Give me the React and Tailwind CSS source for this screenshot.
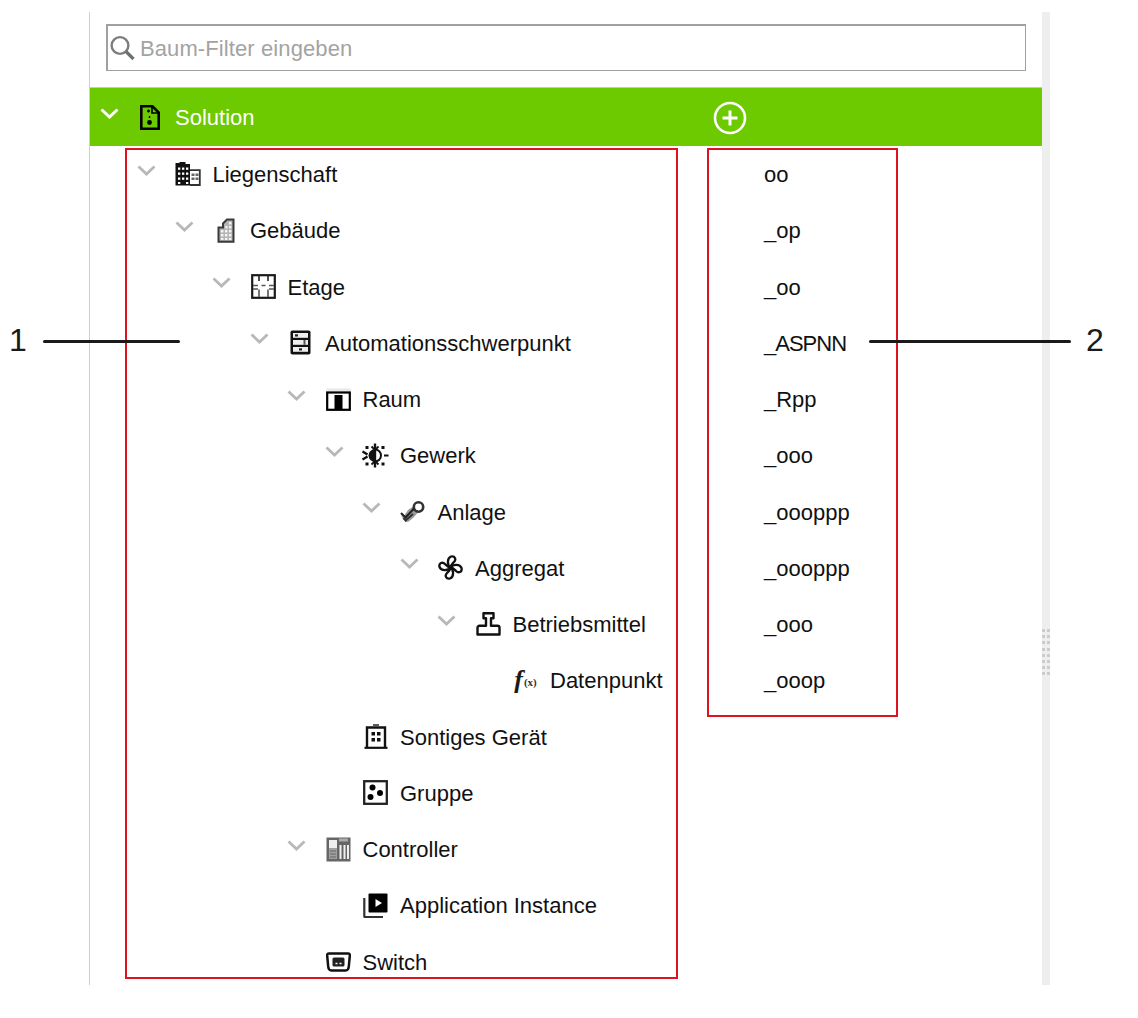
import React from "react";

const S = ({ children, w = 24, h = 24, vb = "0 0 24 24" }) => (
  <svg width={w} height={h} viewBox={vb} fill="none" className="block shrink-0">{children}</svg>
);

const icons = {
  property: (
    <S w={26} h={24} vb="0 0 26 24">
      <path d="M0.500 1h4v-1h6v2h4.500v21.500H0.500z" fill="#111" />
      <g fill="#fff"><rect x="3" y="5.500" width="2.300" height="2.300"/><rect x="7" y="5.500" width="2.300" height="2.300"/><rect x="11" y="5.500" width="2.300" height="2.300"/><rect x="3" y="10.500" width="2.300" height="2.300"/><rect x="7" y="10.500" width="2.300" height="2.300"/><rect x="11" y="10.500" width="2.300" height="2.300"/><rect x="3" y="15.500" width="2.300" height="2.300"/><rect x="7" y="15.500" width="2.300" height="2.300"/><rect x="11" y="15.500" width="2.300" height="2.300"/><rect x="3" y="20" width="2.300" height="2"/><rect x="11" y="20" width="2.300" height="2"/></g>
      <path d="M15 8.200h9.800v14.800H15" stroke="#333" strokeWidth="1.800"/>
      <g fill="#666"><rect x="16.500" y="11.500" width="3" height="2.500"/><rect x="20.500" y="11.500" width="3" height="2.500"/><rect x="16.500" y="15.500" width="3" height="2.500"/><rect x="20.500" y="15.500" width="3" height="2.500"/></g>
    </S>
  ),
  building: (
    <S w={20} h={25} vb="0 0 20 25">
      <path d="M2.500 23.800V9.500H7V5.500L11 1.500h6.500v22.300z" fill="#b5b5b5" stroke="#3a3a3a" strokeWidth="2"/>
      <g fill="#f5f5f5"><rect x="5" y="12" width="2.400" height="2.400"/><rect x="9" y="12" width="2.400" height="2.400"/><rect x="13" y="12" width="2.400" height="2.400"/><rect x="9.500" y="8" width="2" height="2.400"/><rect x="13" y="8" width="2.400" height="2.400"/><rect x="13" y="4" width="2.400" height="2.400"/><rect x="5" y="16" width="2.400" height="2.400"/><rect x="9" y="16" width="2.400" height="2.400"/><rect x="13" y="16" width="2.400" height="2.400"/><rect x="5" y="20" width="2.400" height="2"/><rect x="9" y="20" width="2.400" height="2"/><rect x="13" y="20" width="2.400" height="2"/></g>
    </S>
  ),
  floor: (
    <S w={25} h={25} vb="0 0 25 25">
      <rect x="1.200" y="1.200" width="22.600" height="22.600" stroke="#1a1a1a" strokeWidth="2.200"/>
      <path d="M8 1v6M17 1v6" stroke="#222" strokeWidth="1.600"/>
      <path d="M2 11.500h5M10.500 11.500h4M18 11.500h5M2 15h5M18 15h5M8 15.500v7.500M17 15.500v7.500" stroke="#555" strokeWidth="1.600"/>
    </S>
  ),
  server: (
    <S w={21} h={25} vb="0 0 21 25">
      <rect x="0.500" y="0.500" width="20" height="24" rx="1.800" fill="#111"/>
      <rect x="3" y="3" width="15" height="4.800" fill="#eee"/>
      <rect x="3" y="10" width="15" height="4.800" fill="#eee"/>
      <rect x="3" y="17" width="15" height="4.800" fill="#eee"/>
      <rect x="5" y="4.300" width="3" height="2.200" fill="#222"/>
      <rect x="13.500" y="10" width="2" height="4.800" fill="#555"/>
      <rect x="9" y="18.300" width="3" height="2.200" fill="#222"/>
    </S>
  ),
  room: (
    <S w={25} h={23} vb="0 0 25 23">
      <rect x="0.500" y="0.500" width="24" height="22" fill="#e8e8e8"/>
      <rect x="1.200" y="4.500" width="22.600" height="17.300" fill="#fff" stroke="#000" strokeWidth="2.200"/>
      <rect x="8.500" y="7" width="8" height="14.500" fill="#000"/>
    </S>
  ),
  trade: (
    <S w={27} h={25} vb="0 0 27 25">
      <path d="M13 0.500v24" stroke="#111" strokeWidth="2.400"/>
      <path d="M13 6a6.500 6.500 0 0 0 0 13z" fill="#111"/>
      <path d="M13 6.500a6 6 0 0 1 0 12" stroke="#111" strokeWidth="2"/>
      <path d="M9.500 3.500l3.500 3.500 3.500-3.500M9.500 21.500l3.500-3.500 3.500 3.500" stroke="#111" strokeWidth="1.800"/>
      <path d="M0.500 8.500l5 3M0.500 16.500l5-3" stroke="#111" strokeWidth="2.400"/>
      <g fill="#111"><rect x="3.500" y="3" width="3" height="3"/><rect x="3.500" y="19.500" width="3" height="3"/><rect x="19.500" y="3" width="3" height="3"/><rect x="19.500" y="19.500" width="3" height="3"/><rect x="22" y="11.500" width="4.500" height="2"/></g>
    </S>
  ),
  plant: (
    <S w={26} h={24} vb="0 0 26 24">
      <path d="M8 10l9-6 5 4-9 10-5 4-5-3-2-5 3 2z" fill="#9a9a9a"/>
      <circle cx="18.500" cy="7" r="4.700" fill="#fff" stroke="#333" strokeWidth="2.600"/>
      <path d="M1 13l4.500 4.500L14 8.500" stroke="#222" strokeWidth="2"/>
      <path d="M6 20l7-6M3.500 18l3 3.500" stroke="#333" strokeWidth="2"/>
    </S>
  ),
  fan: (
    <S w={25} h={25} vb="0 0 25 25">
      <g stroke="#111" strokeWidth="2.300" strokeLinejoin="round">
        <path d="M12.500 12.500C9 10 9 3 13 1.500c4-1 5.500 3 3 5.500-1.500 1.500-3 2.500-3.500 5.500z"/>
        <path d="M12.500 12.500C15 9 22 9 23.500 13c1 4-3 5.500-5.500 3-1.500-1.500-2.500-3-5.500-3.500z"/>
        <path d="M12.500 12.500C16 15 16 22 12 23.500c-4 1-5.500-3-3-5.500 1.500-1.500 3-2.500 3.500-5.500z"/>
        <path d="M12.500 12.500C10 16 3 16 1.500 12c-1-4 3-5.500 5.500-3 1.500 1.500 2.500 3 5.500 3.500z"/>
      </g>
    </S>
  ),
  stamp: (
    <S w={25} h={24} vb="0 0 25 24">
      <path d="M7.500 1.300h10v5h-2.500v7.500h6.500a2 2 0 0 1 2 2v6.700H1.500v-6.700a2 2 0 0 1 2-2H10V6.300H7.500z" stroke="#111" strokeWidth="2.400" strokeLinejoin="round"/>
    </S>
  ),
  fx: (
    <span className="flex w-[26px] items-center justify-center font-['Liberation_Serif',serif] text-[#1a1a1a]">
      <span className="text-[26px] leading-none font-bold italic">f</span>
      <span className="mt-[5px] ml-[1px] text-[11px] leading-none font-bold text-[#333]">(x)</span>
    </span>
  ),
  device: (
    <S w={24} h={25} vb="0 0 24 25">
      <path d="M3 24V3.500h18V24" stroke="#111" strokeWidth="2.400"/>
      <path d="M0.500 23.800h23" stroke="#111" strokeWidth="2.200"/>
      <path d="M9 1h6" stroke="#333" strokeWidth="1.600"/>
      <g fill="#111"><rect x="7.500" y="8" width="3.500" height="3.500"/><rect x="13" y="8" width="3.500" height="3.500"/><rect x="7.500" y="14" width="3.500" height="3.500"/><rect x="13" y="14" width="3.500" height="3.500"/></g>
    </S>
  ),
  group: (
    <S w={25} h={25} vb="0 0 25 25">
      <rect x="1.200" y="1.200" width="22.600" height="22.600" stroke="#222" strokeWidth="2.300"/>
      <g fill="#000"><circle cx="9.500" cy="7.500" r="3"/><circle cx="17" cy="13" r="3"/><circle cx="7.500" cy="17" r="3"/></g>
    </S>
  ),
  controller: (
    <S w={25} h={25} vb="0 0 25 25">
      <rect x="0.500" y="0.500" width="24" height="24" fill="#666"/>
      <rect x="3" y="3" width="8" height="8" fill="#eee"/>
      <rect x="3" y="11" width="8" height="11" fill="#a0a0a0"/>
      <path d="M4 14h6M4 17h6M4 20h6" stroke="#666" strokeWidth="1.200"/>
      <path d="M13 3h9" stroke="#aaa" strokeWidth="3"/>
      <path d="M14.500 8v14M18.500 8v14M22 8v14" stroke="#f0f0f0" strokeWidth="2"/>
    </S>
  ),
  app: (
    <S w={25} h={25} vb="0 0 25 25">
      <rect x="5.500" y="0.500" width="19" height="19" rx="1" fill="#000"/>
      <path d="M12.500 6v8l6.500-4z" fill="#fff"/>
      <path d="M1.300 5v18.500a.5.5 0 0 0 .5.500H20" stroke="#333" strokeWidth="2.200"/>
    </S>
  ),
  switch: (
    <S w={25} h={20} vb="0 0 25 20">
      <path d="M3 1.500h19c1.500 0 2 1 1.800 2.500l-1 10.500c-.2 2.500-1.300 4-3.300 4h-14c-2 0-3.100-1.500-3.300-4l-1-10.500C1 2.500 1.500 1.500 3 1.500z" fill="#fff" stroke="#111" strokeWidth="2.500"/>
      <rect x="6.500" y="5.500" width="12" height="9" rx="1.500" fill="#222"/>
      <path d="M9.500 11.500h2M13.500 11.500h2" stroke="#fff" strokeWidth="1.500"/>
    </S>
  ),
};

const rows = [
  ["Liegenschaft", 0, true, "property", "oo"],
  ["Gebäude", 1, true, "building", "_op"],
  ["Etage", 2, true, "floor", "_oo"],
  ["Automationsschwerpunkt", 3, true, "server", "_ASPNN"],
  ["Raum", 4, true, "room", "_Rpp"],
  ["Gewerk", 5, true, "trade", "_ooo"],
  ["Anlage", 6, true, "plant", "_oooppp"],
  ["Aggregat", 7, true, "fan", "_oooppp"],
  ["Betriebsmittel", 8, true, "stamp", "_ooo"],
  ["Datenpunkt", 9, false, "fx", "_ooop"],
  ["Sontiges Gerät", 5, false, "device", ""],
  ["Gruppe", 5, false, "group", ""],
  ["Controller", 4, true, "controller", ""],
  ["Application Instance", 5, false, "app", ""],
  ["Switch", 4, false, "switch", ""],
];

const Chevron = ({ color, sw = 2.8 }) => (
  <svg width="19" height="11" viewBox="0 0 19 11" fill="none" className="block">
    <path d="M1.500 1.500l8 7.500 8-7.500" stroke={color} strokeWidth={sw} />
  </svg>
);

function Row({ label, depth, open, icon, value }) {
  return (
    <div className="flex h-[56.25px] items-center">
      <div className="flex w-[674px] shrink-0 items-center" style={{ paddingLeft: 47 + depth * 37.5 }}>
        <span className="mb-[8px] w-[19px] shrink-0">{open && <Chevron color="#b8b8b8" />}</span>
        <span className="ml-[19px] flex w-[26px] shrink-0 justify-center">{icons[icon]}</span>
        <span className="ml-[11.5px] whitespace-nowrap pt-[2px]">{label}</span>
      </div>
      <span className={value === "_ASPNN" ? "whitespace-nowrap pt-[2px] tracking-[-1px]" : "whitespace-nowrap pt-[2px]"}>{value}</span>
    </div>
  );
}

export default function App() {
  return (
    <div className="relative h-[1018px] w-[1138px] overflow-hidden bg-white pt-[12px] pl-[89px] font-['Liberation_Sans',Arial,sans-serif] text-[22px] leading-none text-[#111]">
      <div className="flex h-[973px] w-[961px]">
        <main className="w-[953px] overflow-hidden border-l border-[#cfcfcf]">
          <div className="mx-[16px] mt-[12px] flex h-[47px] w-[920px] items-center border-t-2 border-r border-b border-l-2 border-[#a0a0a0] pl-[1px] text-[#a3a3a3]">
            <svg width="26" height="26" viewBox="0 0 26 26" fill="none" className="shrink-0">
              <circle cx="11" cy="10.500" r="8.400" stroke="#7d7d7d" strokeWidth="2.400" />
              <path d="M17 16.500l7.500 7.500" stroke="#707070" strokeWidth="3.200" />
            </svg>
            <span className="ml-[5px] pt-[2px] tracking-[0.1px]">Baum-Filter eingeben</span>
          </div>
          <div className="mt-[16px] flex h-[59px] items-center border-t border-[#c8c8c8] bg-[#6dc900] text-white">
            <span className="mb-[8px] ml-[10px] w-[19px] shrink-0"><Chevron color="#fff" sw={3} /></span>
            <span className="ml-[21px] shrink-0">
              <svg width="20" height="25" viewBox="0 0 20 25" fill="none" className="block">
                <path d="M1.300 1.300h11.200l6.200 6.200v16.200H1.300z" stroke="#000" strokeWidth="2.600" />
                <path d="M12 1.500v6.500h6.500" stroke="#000" strokeWidth="1.600" />
                <circle cx="9.500" cy="17.500" r="2.400" fill="#000" />
                <path d="M7 6h3M8.500 4.500v3M9.500 11v2" stroke="#000" strokeWidth="1.400" />
              </svg>
            </span>
            <span className="ml-[15px] w-[538px] shrink-0 pt-[2px]">Solution</span>
            <svg width="34" height="34" viewBox="0 0 34 34" fill="none" className="mt-[2px] shrink-0">
              <circle cx="17" cy="17" r="15" stroke="#fff" strokeWidth="2.600" />
              <path d="M17 9.500v15M9.500 17h15" stroke="#fff" strokeWidth="3" />
            </svg>
          </div>
          <div>
            {rows.map(([label, depth, open, icon, value]) => (
              <Row key={label} label={label} depth={depth} open={open} icon={icon} value={value} />
            ))}
          </div>
        </main>
        <aside className="w-[8px] bg-[#eeeeee] pt-[617px]">
          <div className="grid grid-cols-[3px_3px] gap-x-[2px] gap-y-[3.2px]">
            {Array.from({ length: 16 }, (_, i) => (
              <span key={i} className="h-[3px] bg-[#cccccc]" />
            ))}
          </div>
        </aside>
      </div>

      <div className="absolute top-[148px] left-[125px] h-[831px] w-[553px] border-2 border-[#de1220]" />
      <div className="absolute top-[148px] left-[707px] h-[569px] w-[191px] border-2 border-[#de1220]" />

      <span className="absolute top-[324px] left-[9px] text-[32px] leading-[32px] text-[#1a1a1a]">1</span>
      <div className="absolute top-[340px] left-[43px] h-[2.5px] w-[137px] rounded-full bg-[#1a1a1a]" />
      <div className="absolute top-[340px] left-[869px] h-[2.5px] w-[202px] rounded-full bg-[#1a1a1a]" />
      <span className="absolute top-[324px] left-[1086px] text-[32px] leading-[32px] text-[#1a1a1a]">2</span>
    </div>
  );
}
